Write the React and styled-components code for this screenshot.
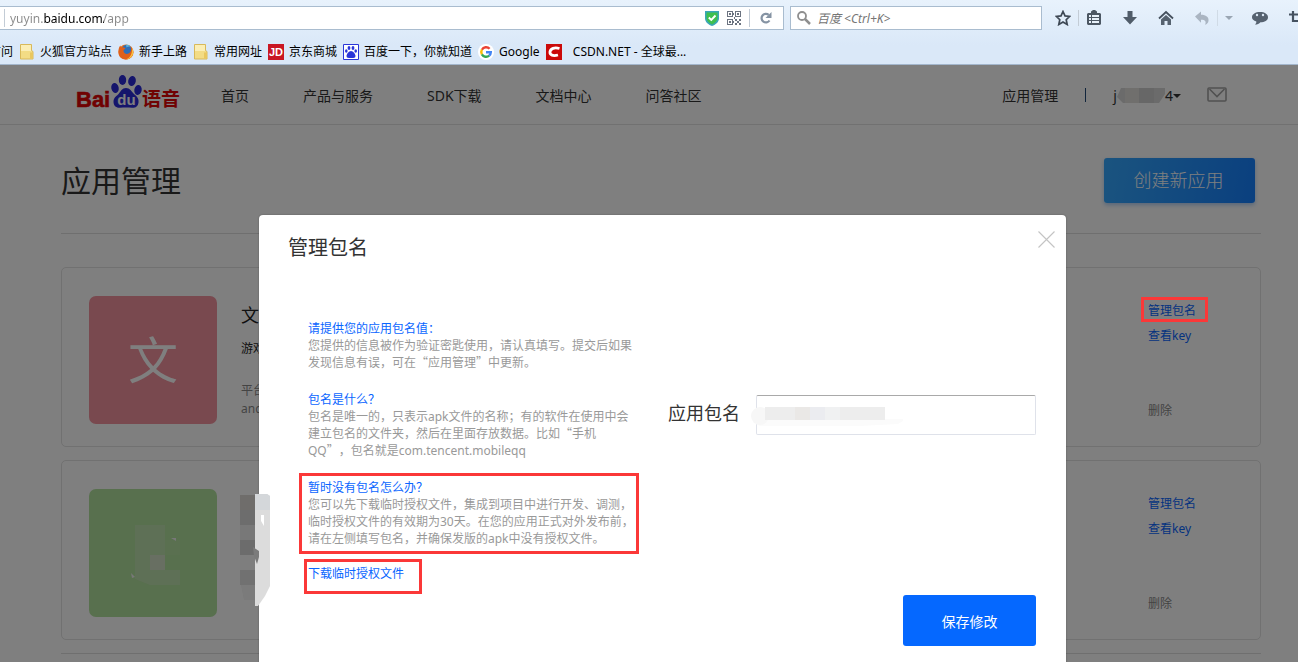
import React from "react";
import styled, { createGlobalStyle } from "styled-components";

const latin = '"Noto Sans", "Noto Sans CJK SC", sans-serif';
const red = "#fb3838";

const GlobalStyle = createGlobalStyle`
  *, *::before, *::after { box-sizing: border-box; }
  body { margin: 0; font-family: ${latin}; font-size: 12px; color: #000; background: #fff; overflow: hidden; text-spacing-trim: space-all; }
  button, input { font: inherit; color: inherit; margin: 0; }
  h1, h2, h3, p { margin: 0; font-weight: 400; }
  a { text-decoration: none; color: inherit; }
  svg { display: block; flex: none; }
`;

const Window = styled.div`
  display: flex;
  flex-direction: column;
  height: 100vh;
`;

/* ---------- browser chrome ---------- */

const Chrome = styled.div`
  flex: none;
  background: linear-gradient(#e8f2fc, #dae8f8 45px);
  border-bottom: 1px solid #a3b6cc;
  overflow: hidden;
`;

const Toolbar = styled.div`
  display: flex;
  align-items: center;
  padding-top: 6px;
`;

const Field = styled.div`
  display: flex;
  align-items: center;
  height: 24px;
  background: #fff;
  border: 1px solid #a9bccf;
`;

const UrlField = styled(Field)`
  flex: 1;
  border-left: 0;
  margin-right: 6px;
  padding: 0 10px 0 4px;
`;

const SearchField = styled(Field)`
  width: 252px;
  padding: 0 6px;
`;

const UrlInput = styled.input`
  flex: 1;
  min-width: 0;
  border: 0;
  outline: 0;
  padding: 0 0 0 5px;
  color: transparent;
  background: linear-gradient(to right, #8a8a8a 39px, #000 39px 99px, #8a8a8a 99px);
  -webkit-background-clip: text;
  background-clip: text;
`;

const SearchInput = styled.input`
  flex: 1;
  min-width: 0;
  border: 0;
  outline: 0;
  padding: 0 0 0 6px;
  &::placeholder { color: #757575; font-style: italic; opacity: 1; }
`;

const Rule = styled.span`
  flex: none;
  width: 1px;
  height: ${(p) => p.$h || 16}px;
  margin: 0 ${(p) => p.$gap || 0}px;
  background: ${(p) => p.$color || "#c3ccd6"};
`;

const IconButton = styled.button`
  flex: none;
  display: block;
  padding: 0;
  border: 0;
  background: none;
  margin-right: ${(p) => p.$gap || 0}px;
`;

const Tools = styled.div`
  display: flex;
  align-items: center;
  width: 256px;
  padding-left: 13px;
  overflow: hidden;
`;

const Bookmarks = styled.nav`
  display: flex;
  align-items: center;
  gap: 6px;
  height: 34px;
  padding-top: 10px;
  margin-left: -11px;
  white-space: nowrap;
`;

const Bookmark = styled.a`
  display: flex;
  align-items: center;
  gap: 5px;
  line-height: 18px;
`;

/* ---------- page ---------- */

const Viewport = styled.div`
  position: relative;
  flex: 1;
  min-height: 0;
  overflow: hidden;
`;

const SiteHeader = styled.header`
  display: flex;
  align-items: center;
  height: 60px;
  padding: 0 71px 0 76px;
  border-bottom: 1px solid #e2e2e2;
  font-size: 14px;
  color: #333;
`;

const SiteNav = styled.nav`
  display: flex;
  gap: 54px;
  margin-left: 41px;
  flex: 1;
`;

const Account = styled.div`
  display: flex;
  align-items: center;
`;

const UserButton = styled.button`
  display: flex;
  align-items: center;
  padding: 2px 0 0;
  border: 0;
  background: none;
  margin-right: 26px;
`;

const Main = styled.main`
  padding: 33px 37px 0 61px;
`;

const TitleRow = styled.div`
  display: flex;
  align-items: center;
  justify-content: space-between;
  padding: 0 6px 30px 0;
  border-bottom: 1px solid #dedede;
  margin-bottom: 33px;
`;

const PageTitle = styled.h1`
  font-size: 30px;
  line-height: 45px;
  color: #333;
`;

const CreateButton = styled.button`
  width: 151px;
  height: 45px;
  padding: 0 2px 4px 0;
  border: 0;
  border-radius: 3px;
  color: #fff;
  font-size: 18px;
  font-weight: 300;
  background: linear-gradient(100deg, #35a8ff, #1580ff);
  box-shadow: 0 2px 4px rgba(20, 110, 220, 0.35);
`;

const CardList = styled.div`
  display: flex;
  flex-direction: column;
  gap: 13px;
  padding-bottom: 13px;
  border-bottom: 1px solid #dedede;
`;

const Card = styled.article`
  display: flex;
  height: 180px;
  padding: 28px 0 0 27px;
  border: 1px solid #e2e2e2;
  border-radius: 5px;
`;

const Tile = styled.div`
  display: flex;
  align-items: center;
  justify-content: center;
  width: 128px;
  height: 128px;
  border-radius: 7px;
  background: ${(p) => p.$color};
  color: #fff;
  font-size: 50px;
  line-height: 1;
`;

const CardInfo = styled.div`
  flex: 1;
  padding: 5px 0 0 24px;
  line-height: 18px;
`;

const AppName = styled.h2`
  font-size: 18px;
  line-height: 28px;
  margin-bottom: 11px;
  color: #222;
`;

const AppKind = styled.p`
  color: #222;
  margin-bottom: 24px;
`;

const AppMeta = styled.p`
  color: #888;
`;

const CardActions = styled.div`
  display: flex;
  flex-direction: column;
  align-items: flex-start;
  width: 112px;
  padding-top: 2px;
  line-height: 25px;
`;

const CardLink = styled.a`
  position: relative;
  color: ${(p) => (p.$muted ? "#888" : "#0a66ff")};
  margin-top: ${(p) => (p.$muted ? 50 : 0)}px;
`;

const Highlight = styled.span`
  position: absolute;
  z-index: 3;
  inset: ${(p) => p.$inset};
  border: 3px solid ${red};
  pointer-events: none;
`;

/* ---------- dialog ---------- */

const Backdrop = styled.div`
  position: absolute;
  z-index: 2;
  inset: 0;
  display: flex;
  justify-content: center;
  align-items: flex-start;
  padding: 150px 0 0 27px;
  background: rgba(0, 0, 0, 0.5);
`;

const Dialog = styled.section`
  position: relative;
  width: 807px;
  padding: 16px 30px 40px 29px;
  background: #fff;
  border-radius: 4px;
  box-shadow: 0 0 2px rgba(0, 0, 0, 0.3);
`;

const DialogHeader = styled.div`
  display: flex;
  justify-content: space-between;
  align-items: flex-start;
  height: 89px;
`;

const DialogTitle = styled.h2`
  font-size: 20px;
  line-height: 34px;
  color: #333;
`;

const CloseButton = styled(IconButton)`
  margin-right: -19px;
`;

const DialogBody = styled.div`
  display: flex;
  justify-content: space-between;
  padding-left: 20px;
`;

const Tips = styled.div`
  display: flex;
  flex-direction: column;
  align-items: flex-start;
  gap: 20px;
  width: 324px;
  line-height: 17px;
  white-space: nowrap;
  color: #999;
`;

const Tip = styled.div`
  position: relative;
  width: 100%;
`;

const TipTitle = styled.h3`
  font-size: 12px;
  line-height: 17px;
  color: #0a66ff;
`;

const Wide = styled.span`
  font-family: "Noto Sans CJK SC", sans-serif;
  line-height: 0;
`;

const DownloadLink = styled.a`
  position: relative;
  margin-top: -2px;
  color: #0a66ff;
`;

const Form = styled.form`
  display: flex;
  flex-direction: column;
  align-items: flex-end;
  gap: 160px;
  padding-top: 75px;
`;

const FormRow = styled.div`
  display: flex;
  align-items: flex-start;
  gap: 16px;
`;

const Label = styled.label`
  font-size: 18px;
  line-height: 36px;
  color: #333;
`;

const InputWrap = styled.div`
  position: relative;
`;

const TextInput = styled.input`
  display: block;
  width: 280px;
  height: 40px;
  padding: 0 10px;
  border: 1px solid #dfe2ea;
  border-top-color: #a9a9a9;
  border-radius: 2px;
  outline: 0;
`;

const InputMask = styled.svg`
  position: absolute;
  left: -5px;
  top: 10px;
`;

const SideMask = styled.svg`
  position: absolute;
  left: -19px;
  top: 279px;
`;

const SaveButton = styled.button`
  width: 133px;
  height: 51px;
  padding: 0;
  border: 0;
  border-radius: 3px;
  background: #0568ff;
  color: #fff;
  font-size: 14px;
`;

/* ---------- drawings ---------- */

const Shield = () => (
  <svg width="14" height="15" viewBox="0 0 14 15">
    <path d="M0 0h14v7c0 4-3 6.500-7 8c-4-1.500-7-4-7-8z" fill="#3aa6b8" />
    <path d="M1.500 1.500h11v5.500c0 3-2.500 5-5.500 6.500c-3-1.500-5.500-3.500-5.500-6.500z" fill="#3fbf4f" />
    <path d="M3.800 6.500l2.500 2.500l4.200-4.500" fill="none" stroke="#fff" strokeWidth="1.900" />
  </svg>
);

const QrCode = () => (
  <svg width="14" height="14" viewBox="0 0 14 14" fill="#6b7380">
    <path fillRule="evenodd" d="M0 0h6v6h-6zM1 1v4h4v-4zM8 0h6v6h-6zM9 1v4h4v-4zM0 8h6v6h-6zM1 9v4h4v-4z" />
    <path d="M2 2h2v2h-2zM10 2h2v2h-2zM2 10h2v2h-2zM7 6h1v2h-1zM8 8h2v2h-2zM10 10h2v2h-2zM12 8h2v2h-2zM8 12h2v2h-2zM12 12h2v2h-2zM6 10h1v2h-1zM6 2h1v2h-1z" />
  </svg>
);

const Reload = () => (
  <svg width="14" height="14" viewBox="0 0 14 14">
    <path d="M10.500 9.500a4.300 4.300 0 1 1-.8-5.600" fill="none" stroke="#8593a3" strokeWidth="2.200" />
    <path d="M12.500 1v6h-6z" fill="#8593a3" />
  </svg>
);

const Magnifier = () => (
  <svg width="14" height="14" viewBox="0 0 14 14" fill="none" stroke="#8f8f8f">
    <circle cx="5" cy="5" r="4" strokeWidth="1.800" />
    <path d="M8 8l5 5" strokeWidth="2.500" />
  </svg>
);

const Star = () => (
  <svg width="16" height="16" viewBox="0 0 16 16">
    <path d="M8 1.500l2 4.400l4.700.5l-3.500 3.300l1 4.800l-4.200-2.500l-4.200 2.500l1-4.800l-3.500-3.300l4.700-.5z" fill="none" stroke="#3e4854" strokeWidth="1.700" />
  </svg>
);

const Clipboard = () => (
  <svg width="16" height="16" viewBox="0 0 16 16">
    <path d="M5 3v-1.500l2-1.500h2l2 1.500v1.500h3l1 1v10l-1 1h-12l-1-1v-10l1-1z" fill="#4c5763" />
    <path d="M3 5h2v2h-2zM6 5h7v2h-7zM3 8h2v2h-2zM6 8h7v2h-7zM3 11h2v2h-2zM6 11h7v2h-7z" fill="#e8f1fa" />
  </svg>
);

const ArrowDown = () => (
  <svg width="16" height="16" viewBox="0 0 16 16">
    <path d="M5.500 1h5v6h4.500l-7 7.500l-7-7.500h4.500z" fill="#505c69" />
  </svg>
);

const Home = () => (
  <svg width="16" height="16" viewBox="0 0 16 16">
    <path d="M1 8.500l7-6.500l7 6.500" fill="none" stroke="#46515e" strokeWidth="1.800" />
    <path d="M3 9.500l5-4.500l5 4.500v5.500h-3.500v-4h-3v4h-3.500z" fill="#56626f" />
  </svg>
);

const Undo = () => (
  <svg width="16" height="16" viewBox="0 0 16 16">
    <path d="M1 6.500l6-5v3.300c5 0 8 2.500 7.500 6c-.2 2-1.500 3.500-3.500 4c1.500-3 .5-5-4-5v2.900z" fill="#aab5c2" />
  </svg>
);

const Caret = ({ color = "#9aa6b3" }) => (
  <svg width="8" height="4" viewBox="0 0 8 4">
    <path d="M0 0h8l-4 4z" fill={color} />
  </svg>
);

const Chat = () => (
  <svg width="16" height="16" viewBox="0 0 16 16">
    <path d="M8 2c4.500 0 8 2 8 5.200s-3.500 5-7.500 5c-1.500 1.500-3 2.300-5.500 2.300c1-.8 1.500-1.800 1.300-3c-2.700-.8-4.300-2.300-4.300-4.300c0-3.200 3.500-5.200 8-5.200z" fill="#566270" />
    <circle cx="5" cy="5" r="1.200" fill="#dce8f5" />
    <circle cx="11" cy="5" r="1.200" fill="#dce8f5" />
  </svg>
);

const Crop = () => (
  <svg width="16" height="16" viewBox="0 0 16 16">
    <path d="M5 1v10h11M1 4.500h11v11" fill="none" stroke="#465260" strokeWidth="2.200" />
  </svg>
);

const Folder = () => (
  <svg width="16" height="16" viewBox="0 0 16 16">
    <path d="M1.500 .5h11v6l1.500 1v7.500h-12.500z" fill="#f3dc85" stroke="#d8b95a" />
    <path d="M2 1h10v6h-10z" fill="#fbeeb5" />
    <path d="M11 8.500h3v6h-3z" fill="#e9c75f" />
  </svg>
);

const Firefox = () => (
  <svg width="16" height="16" viewBox="0 0 16 16">
    <circle cx="8" cy="8" r="7.600" fill="#e8731c" />
    <circle cx="8.500" cy="6" r="5" fill="#2f6fb8" />
    <path d="M8 .5c2 0 4 1 5 2.500c-1.500-.8-3-.5-4.500.5z" fill="#55b5e0" />
    <path d="M.5 7c0-3 1-4.500 2-5.500c0 1 .5 1.500 1 2c1.500-.5 3 0 4 1c-1 .5-2 1-2 2.500c.5 2.500 3 3.500 5 2.500c2-1 3-3 2.500-6c2.500 2.500 3 6 1 8.700c-2 2.800-5.500 4-9 2.800c-3-1-4.700-4-4.500-8z" fill="#e0601a" />
    <path d="M14 4c2 3 1.500 7-1 9.300c-1.500 1.500-3.500 2.200-5.500 2.200c4-1 7-5 6.500-11.500z" fill="#f9c440" />
  </svg>
);

const JdLogo = () => (
  <svg width="16" height="16" viewBox="0 0 16 16">
    <path d="M0 0h16v16h-16z" fill="#c91623" />
    <text x="8" y="12" textAnchor="middle" fontFamily="Liberation Sans, sans-serif" fontSize="11" fontWeight="700" fill="#fff">JD</text>
  </svg>
);

const BaiduLogo = () => (
  <svg width="16" height="16" viewBox="0 0 16 16" fill="#2a36d8">
    <path d="M.5.500h15v15h-15z" fill="#fff" stroke="#2a36d8" />
    <ellipse cx="6" cy="4" rx="1.400" ry="2" />
    <ellipse cx="10" cy="4" rx="1.400" ry="2" />
    <ellipse cx="3.300" cy="7" rx="1.300" ry="1.800" />
    <ellipse cx="12.700" cy="7" rx="1.300" ry="1.800" />
    <path d="M8 7c2 0 4.500 3 4.500 5s-1.500 2-4.500 2s-4.500 0-4.500-2s2.500-5 4.500-5z" />
  </svg>
);

const GoogleLogo = () => (
  <svg width="16" height="16" viewBox="0 0 16 16" fill="none" strokeWidth="2.400">
    <circle cx="8" cy="8" r="8" fill="#fff" />
    <path d="M11.600 4.700a4.800 4.800 0 0 0-7.700 1" stroke="#ea4335" />
    <path d="M3.900 5.700a4.800 4.800 0 0 0 0 4.700" stroke="#fbbc05" />
    <path d="M3.900 10.400a4.800 4.800 0 0 0 7.300 1.200" stroke="#34a853" />
    <path d="M11.200 11.600a4.800 4.800 0 0 0 1.600-3.400h-4.800" stroke="#4285f4" />
  </svg>
);

const CsdnLogo = () => (
  <svg width="16" height="16" viewBox="0 0 16 16">
    <path d="M0 0h16v16h-16z" fill="#cb0a0a" />
    <path d="M13.500 4.500c-5-1.500-9 0-9.500 3.300s3 4.500 8 3.200" fill="none" stroke="#fff" strokeWidth="2.800" />
  </svg>
);

const SiteLogo = () => (
  <svg width="104" height="40" viewBox="0 0 104 40" role="img" aria-label="Baidu 语音">
    <g fontFamily="Liberation Sans, Noto Sans CJK SC, sans-serif" fontWeight="700" fill="#e00505">
      <text x="0" y="32" fontSize="22" stroke="#e00505" strokeWidth="0.600">Bai</text>
      <text x="66" y="31" fontSize="19">语音</text>
    </g>
    <g fill="#2a2ad8">
      <ellipse cx="46.500" cy="5" rx="3.700" ry="5" />
      <ellipse cx="56" cy="6" rx="3.800" ry="5" transform="rotate(12 56 6)" />
      <ellipse cx="39" cy="13" rx="3.700" ry="5" transform="rotate(-12 39 13)" />
      <ellipse cx="62" cy="15" rx="3.700" ry="5" transform="rotate(8 62 15)" />
      <path d="M50 13c4 0 5.500 3.500 8 6c3 2.500 5 4.500 4.500 8.500c-.5 4-3 5.500-6.500 5.300c-4-.3-8-.3-12 0c-4 .3-6.500-2-6.500-6c0-4 2.500-5.300 5-7.800c2.300-2.500 3.500-6 7.500-6z" />
    </g>
    <text x="50.500" y="30" textAnchor="middle" fontFamily="Liberation Sans, sans-serif" fontSize="15" fontWeight="700" fill="#fff">du</text>
  </svg>
);

const NameMask = () => (
  <svg width="48" height="16" viewBox="0 0 48 16">
    <path d="M4 0h44v6l-6 9h-36l-6-6z" fill="#d6d6d6" />
    <path d="M8 0h14v15h-14z" fill="#e0dfda" />
    <path d="M22 0h15v15h-15z" fill="#cfcfcf" />
  </svg>
);

const Mail = () => (
  <svg width="20" height="15" viewBox="0 0 20 15" fill="none" stroke="#a3a3a3" strokeWidth="1.600">
    <rect x="1" y="1" width="18" height="13" rx="1" />
    <path d="M2.500 2l7.500 7.500l7.500-7.500" />
  </svg>
);

const TileMask = () => (
  <svg width="128" height="128" viewBox="0 0 128 128">
    <path d="M46 36h30v45h15v15h-30l-15-6z" fill="#c6e0b8" opacity="0.600" />
    <path d="M61 66h15v15h-15z" fill="#dcdcd4" opacity="0.600" />
    <path d="M76 51h15v15h-15z" fill="#c6e0b8" opacity="0.200" />
    <path d="M82 49h5v3zM42 84l4 4l-3 1z" fill="#f0f0f0" />
  </svg>
);

const SideMosaic = () => (
  <SideMask width="31" height="113" viewBox="0 0 31 113">
    <path d="M0 1h15v15h-15z" fill="#6f6d6b" />
    <path d="M0 16h15v15h-15z" fill="#6d6d6d" />
    <path d="M0 31h15v15h-15z" fill="#787878" />
    <path d="M0 46h15v15h-15z" fill="#6c6c6c" />
    <path d="M0 61h15v15h-15z" fill="#7e7e7e" />
    <path d="M0 76h15v15h-15z" fill="#717171" />
    <path d="M1 91h14v15h-11z" fill="#7b7b7b" />
    <path d="M15 0h12l3 2v90l-5 10l-7 10h-3z" fill="#dcdcdc" />
    <path d="M15 0h12l3 2v14h-15z" fill="#d4d7da" />
    <path d="M21 21h3v11l-3-5z" fill="#fff" />
    <path d="M13 53l6 4v6l-2 7l-3-8z" fill="#7b7b7b" />
  </SideMask>
);

const bookmarks = [
  { icon: Folder, label: "火狐官方站点" },
  { icon: Firefox, label: "新手上路" },
  { icon: Folder, label: "常用网址" },
  { icon: JdLogo, label: "京东商城" },
  { icon: BaiduLogo, label: "百度一下，你就知道" },
  { icon: GoogleLogo, label: "Google" },
  { icon: CsdnLogo, label: "\u00a0\u00a0CSDN.NET - 全球最..." },
];

const navItems = ["首页", "产品与服务", "SDK下载", "文档中心", "问答社区"];

const ReloadSlot = styled.span`
  display: block;
  padding-left: 9px;
`;

const ToolSlot = styled.span`
  display: block;
  padding-left: 7px;
`;

const UserRule = styled(Rule)`
  margin: 0 27px;
`;

function BrowserChrome() {
  return (
    <Chrome>
      <Toolbar>
        <UrlField>
          <Rule $h={18} />
          <UrlInput aria-label="网址" defaultValue="yuyin.baidu.com/app" />
          <IconButton $gap={8} aria-label="网站安全"><Shield /></IconButton>
          <IconButton $gap={8} aria-label="二维码"><QrCode /></IconButton>
          <Rule $h={18} />
          <IconButton aria-label="刷新"><ReloadSlot><Reload /></ReloadSlot></IconButton>
        </UrlField>
        <SearchField>
          <Magnifier />
          <SearchInput aria-label="搜索" placeholder="百度 <Ctrl+K>" />
        </SearchField>
        <Tools>
          <IconButton $gap={7} aria-label="收藏"><Star /></IconButton>
          <Rule />
          <IconButton $gap={20} aria-label="书签"><ToolSlot><Clipboard /></ToolSlot></IconButton>
          <IconButton $gap={20} aria-label="下载"><ArrowDown /></IconButton>
          <IconButton $gap={20} aria-label="主页"><Home /></IconButton>
          <IconButton $gap={7} aria-label="撤销"><Undo /></IconButton>
          <Rule $color="#d0dbe6" />
          <IconButton $gap={19} aria-label="更多"><ToolSlot><Caret /></ToolSlot></IconButton>
          <IconButton $gap={20} aria-label="聊天"><Chat /></IconButton>
          <IconButton aria-label="截图"><Crop /></IconButton>
        </Tools>
      </Toolbar>
      <Bookmarks>
        <Bookmark href="#">访问</Bookmark>
        {bookmarks.map(({ icon: Icon, label }) => (
          <Bookmark href="#" key={label}>
            <Icon />
            {label}
          </Bookmark>
        ))}
      </Bookmarks>
    </Chrome>
  );
}

function AppCard({ tile, info, highlighted }) {
  return (
    <Card>
      {tile}
      <CardInfo>{info}</CardInfo>
      <CardActions>
        <CardLink href="#">
          管理包名
          {highlighted && <Highlight $inset="-1px -12px 1px -7px" />}
        </CardLink>
        <CardLink href="#">查看key</CardLink>
        <CardLink href="#" $muted>删除</CardLink>
      </CardActions>
    </Card>
  );
}

function PackageDialog() {
  return (
    <Dialog role="dialog" aria-labelledby="dialog-title">
      <DialogHeader>
        <DialogTitle id="dialog-title">管理包名</DialogTitle>
        <CloseButton aria-label="关闭">
          <svg width="17" height="17" viewBox="0 0 17 17">
            <path d="M.5.500l16 16M16.500.500l-16 16" stroke="#c4c4c4" strokeWidth="1.100" />
          </svg>
        </CloseButton>
      </DialogHeader>
      <DialogBody>
        <Tips>
          <Tip>
            <TipTitle>请提供您的应用包名值：</TipTitle>
            <p>
              您提供的信息被作为验证密匙使用，请认真填写。提交后如果<br />
              发现信息有误，可在<Wide>“</Wide>应用管理<Wide>”</Wide>中更新。
            </p>
          </Tip>
          <Tip>
            <TipTitle>包名是什么？</TipTitle>
            <p>
              包名是唯一的，只表示apk文件的名称；有的软件在使用中会<br />
              建立包名的文件夹，然后在里面存放数据。比如<Wide>“</Wide>手机<br />
              QQ<Wide>”</Wide>，包名就是com.tencent.mobileqq
            </p>
          </Tip>
          <Tip>
            <TipTitle>暂时没有包名怎么办？</TipTitle>
            <p>
              您可以先下载临时授权文件，集成到项目中进行开发、调测，<br />
              临时授权文件的有效期为30天。在您的应用正式对外发布前，<br />
              请在左侧填写包名，并确保发版的apk中没有授权文件。
            </p>
            <Highlight $inset="-6px -7px -7px -9px" />
          </Tip>
          <DownloadLink href="#">
            下载临时授权文件
            <Highlight $inset="-6px -18px -12px -4px" />
          </DownloadLink>
        </Tips>
        <Form onSubmit={(e) => e.preventDefault()}>
          <FormRow>
            <Label htmlFor="package">应用包名</Label>
            <InputWrap>
              <TextInput id="package" type="text" />
              <InputMask width="152" height="22" viewBox="0 0 152 22">
                <path d="M9 2l-6 3l-3 6l3 7l6 3h100l38-2l5-3v-2h-138z" fill="#fbfbfb" />
                <circle cx="9" cy="11" r="9" fill="#f7f7f7" />
                <path d="M14 2h120v13h-120z" fill="#ededed" />
                <path d="M44 2h15v13h-15z" fill="#eae8e6" />
                <path d="M59 2h15v13h-15z" fill="#ebecf0" />
                <path d="M74 2h15v13h-15z" fill="#f0f1f2" />
              </InputMask>
            </InputWrap>
          </FormRow>
          <SaveButton type="submit">保存修改</SaveButton>
        </Form>
      </DialogBody>
      <SideMosaic />
    </Dialog>
  );
}

export default function App() {
  return (
    <Window>
      <GlobalStyle />
      <BrowserChrome />
      <Viewport>
        <SiteHeader>
          <SiteLogo />
          <SiteNav>
            {navItems.map((item) => (
              <a href="#" key={item}>{item}</a>
            ))}
          </SiteNav>
          <Account>
            <a href="#">应用管理</a>
            <UserRule $h={14} $color="#234a78" />
            <UserButton>
              j<NameMask />4<Caret color="#333" />
            </UserButton>
            <IconButton aria-label="消息"><Mail /></IconButton>
          </Account>
        </SiteHeader>
        <Main>
          <TitleRow>
            <PageTitle>应用管理</PageTitle>
            <CreateButton>创建新应用</CreateButton>
          </TitleRow>
          <CardList>
            <AppCard
              highlighted
              tile={<Tile $color="#f2929e">文</Tile>}
              info={
                <>
                  <AppName>文</AppName>
                  <AppKind>游戏</AppKind>
                  <AppMeta>平台</AppMeta>
                  <AppMeta>android</AppMeta>
                </>
              }
            />
            <AppCard tile={<Tile $color="#b0e09c"><TileMask /></Tile>} />
          </CardList>
        </Main>
        <Backdrop>
          <PackageDialog />
        </Backdrop>
      </Viewport>
    </Window>
  );
}
